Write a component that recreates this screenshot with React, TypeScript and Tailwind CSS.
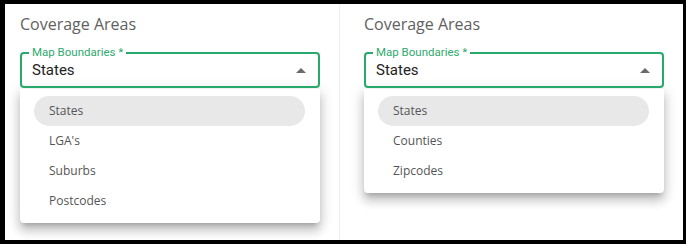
import React from 'react';

/**
 * Two "Coverage Areas" panels, each with an open Map Boundaries select
 */
const leftOptions = ['States', "LGA's", 'Suburbs', 'Postcodes'];
const rightOptions = ['States', 'Counties', 'Zipcodes'];

function BoundarySelect({ options }: { options: string[] }) {
  return (
    <div className="w-[300px]">
      {/* Outlined field */}
      <div className="relative h-[36px] rounded-[4px] border-2 border-[#27a96b] flex items-center pl-[10px] pr-[11px]">
        <span className="absolute -top-[9px] left-[7px] bg-white px-[3px] text-[11.5px] leading-[14px] text-[#2eaa6e] font-['Roboto',sans-serif]">
          Map Boundaries *
        </span>
        <span className="flex-1 text-[15px] text-[#222] font-['Roboto',sans-serif] leading-none">States</span>
        <svg width="10" height="5" viewBox="0 0 10 5" className="mr-[1px]">
          <path d="M0 5 L5 0 L10 5 Z" fill="#6b6b6b" />
        </svg>
      </div>

      {/* Open menu */}
      <div className="mt-px bg-white rounded-b-[4px] py-[7px] shadow-[0_5px_5px_-3px_rgba(0,0,0,0.2),0_8px_10px_1px_rgba(0,0,0,0.14),0_3px_14px_2px_rgba(0,0,0,0.12)]">
        {options.map((opt, i) => (
          <div
            key={opt}
            className={
              i === 0
                ? 'ml-[14px] mr-[15px] h-[30px] rounded-full bg-[#e8e8e8] flex items-center pl-[15px] text-[12px] text-[#555] font-["Open_Sans",sans-serif]'
                : 'ml-[14px] mr-[15px] h-[30px] flex items-center pl-[15px] text-[12px] text-[#555] font-["Open_Sans",sans-serif]'
            }
          >
            {opt}
          </div>
        ))}
      </div>
    </div>
  );
}

export default function App() {
  return (
    <div className="w-[688px] h-[247px] bg-white">
      <div className="w-[686px] h-[244px] border-black border-l-[5px] border-t-[4px] border-r-[3px] border-b-[4px] flex">
        {/* Left panel */}
        <div className="w-[334px] h-full pl-[15px] pt-[10px]">
          <div className="text-[16px] leading-[20px] text-[#616161] font-['Open_Sans',sans-serif] mb-[18px]">Coverage Areas</div>
          <BoundarySelect options={leftOptions} />
        </div>

        <div className="w-px h-full bg-[#eeeeee]" />

        {/* Right panel */}
        <div className="flex-1 h-full pl-[24px] pt-[10px]">
          <div className="text-[16px] leading-[20px] text-[#616161] font-['Open_Sans',sans-serif] mb-[18px]">Coverage Areas</div>
          <BoundarySelect options={rightOptions} />
        </div>
      </div>
    </div>
  );
}
